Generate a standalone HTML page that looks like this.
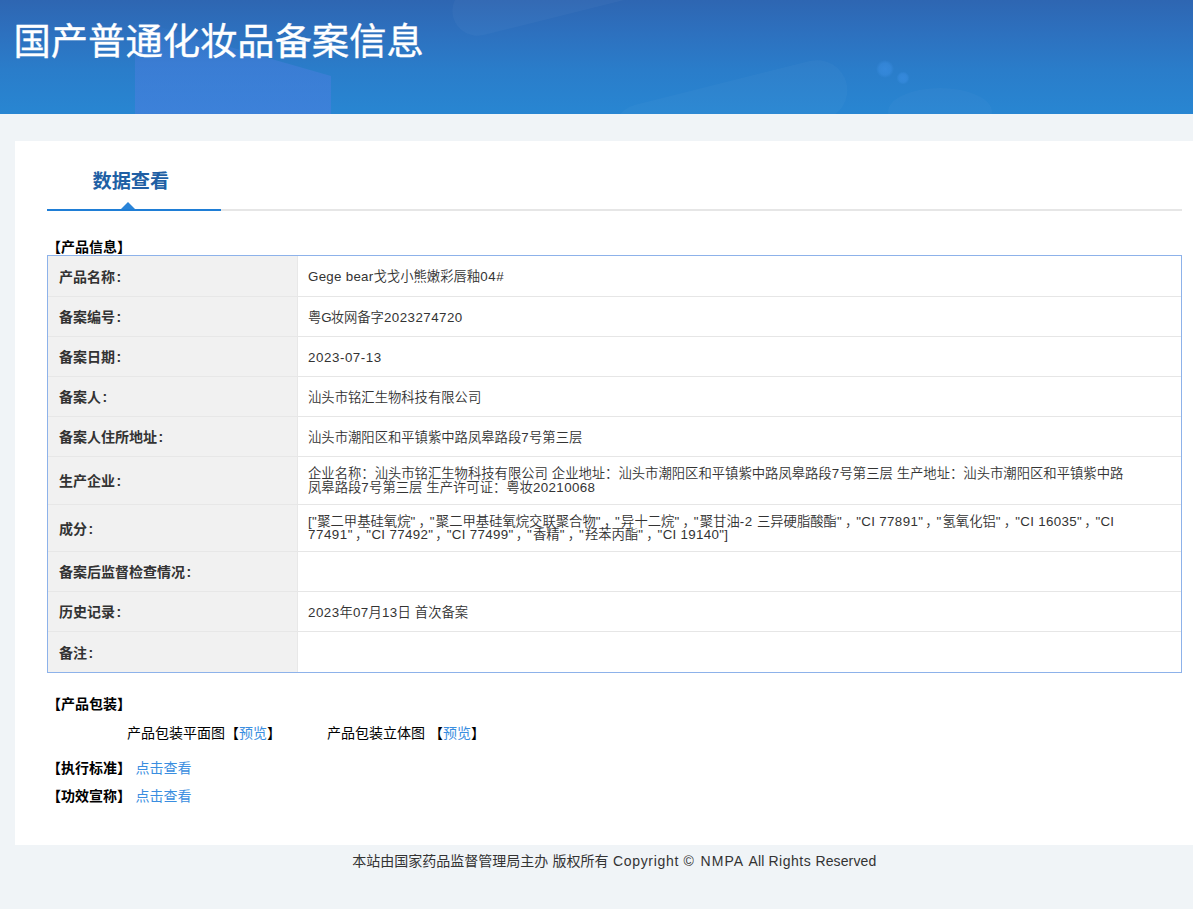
<!DOCTYPE html>
<html lang="zh-CN">
<head>
<meta charset="utf-8">
<title>国产普通化妆品备案信息</title>
<style>
*{box-sizing:border-box;}
html,body{margin:0;padding:0;}
body{background:#f0f4f7;font-family:"Liberation Sans","Noto Sans CJK SC",sans-serif;font-size:13px;color:#333;}
.pg{position:relative;width:1193px;height:909px;overflow:hidden;background:#f0f4f7;}
.hd{position:absolute;left:0;top:0;width:1228px;height:114px;overflow:hidden;background:linear-gradient(180deg,#2e66b2 0%,#2d71bf 30%,#2a7dca 62%,#2886d2 100%);}
.hd svg{position:absolute;left:0;top:0;}
.hd h1{position:absolute;left:13.5px;top:14.5px;margin:0;font-weight:400;font-size:37.3px;line-height:54px;color:#fff;white-space:nowrap;-webkit-text-stroke:0.35px #fff;}
.card{position:absolute;left:15px;top:141px;width:1198px;height:704px;background:#fff;}
.tabline{position:absolute;left:32px;top:68px;width:1135px;height:2px;background:#e6e6e6;}
.tabon{position:absolute;left:32px;top:68px;width:174px;height:2px;background:#1f7ed6;}
.tri{position:absolute;left:106px;top:61px;width:0;height:0;border-left:7px solid transparent;border-right:7px solid transparent;border-bottom:7px solid #2a84d8;}
.tabt{position:absolute;left:77.5px;top:27px;margin:0;font-size:19.2px;line-height:28px;font-weight:700;color:#205fa4;white-space:nowrap;}
.sec{position:absolute;left:32px;font-size:14px;line-height:18px;font-weight:700;color:#000;white-space:nowrap;}
table.t{position:absolute;left:32px;top:114px;width:1135px;border-collapse:separate;border-spacing:0;border:1px solid #8db2ea;table-layout:fixed;}
table.t td{padding:2px 10px 0 10px;font-weight:350;font-size:13.333px;line-height:13.333px;border-bottom:1px solid #e6e6e6;vertical-align:middle;color:#333;}
table.t td.l{width:250px;padding-left:11px;background:#f1f1f1;font-weight:700;font-size:14px;line-height:14px;border-right:1px solid #e8e8e8;border-bottom-color:#e7e7e7;}
table.t td.l i{font-style:normal;margin-left:1.5px;}
table.t td u{text-decoration:none;position:relative;left:2px;}
table.t tr{height:40px;}
table.t tr.last td{border-bottom:0;}
table.t tr.two td{padding-top:0;}
table.t td.l,table.t tr.two td.l{padding-top:1px;}
table.t tr.first{height:41px;}
.pk{position:absolute;font-size:14px;line-height:18px;color:#000;white-space:nowrap;}
a{color:#3a8ee0;text-decoration:none;}
.ft{position:absolute;left:352.2px;top:850.5px;font-size:14px;line-height:20px;color:#333;white-space:nowrap;}
</style>
</head>
<body>
<div class="pg">
<div class="hd">
<svg width="1228" height="114" viewBox="0 0 1228 114">
<defs>
<linearGradient id="pg" x1="0" y1="0" x2="0" y2="1"><stop offset="0" stop-color="#4a7ede" stop-opacity="0"/><stop offset="0.45" stop-color="#4a7ede" stop-opacity="0.5"/><stop offset="1" stop-color="#4a7ede" stop-opacity="0.6"/></linearGradient>
<radialGradient id="fl"><stop offset="0" stop-color="#3d90e6" stop-opacity="0.6"/><stop offset="0.65" stop-color="#3d90e6" stop-opacity="0.45"/><stop offset="1" stop-color="#3d90e6" stop-opacity="0"/></radialGradient>
</defs>
<rect x="450" y="-34" width="215" height="50" rx="25" fill="#fff" fill-opacity="0.032" transform="rotate(-14 557 -9)"/>
<rect x="610" y="82" width="240" height="60" rx="30" fill="#fff" fill-opacity="0.028" transform="rotate(-14 730 112)"/>
<ellipse cx="940" cy="112" rx="52" ry="24" fill="#fff" fill-opacity="0.022"/>
<polygon points="135,20 331,76 331,114 135,114" fill="url(#pg)"/>
<circle cx="885" cy="69" r="9" fill="url(#fl)"/>
<circle cx="903" cy="78" r="6.5" fill="url(#fl)"/>
</svg>
<h1>国产普通化妆品备案信息</h1>
</div>
<div class="card">
<div class="tabline"></div><div class="tabon"></div><div class="tri"></div>
<h3 class="tabt">数据查看</h3>
<div class="sec" style="top:97px;">【产品信息】</div>
<table class="t">
<tr class="first"><td class="l">产品名称<i>:</i></td><td><span style="letter-spacing:0.280px">Gege bear</span>戈戈小熊嫩彩唇釉<span style="letter-spacing:0.617px">04#</span></td></tr>
<tr><td class="l">备案编号<i>:</i></td><td>粤<span style="letter-spacing:-1.075px">G</span>妆网备字<span style="letter-spacing:0.458px">2023274720</span></td></tr>
<tr><td class="l">备案日期<i>:</i></td><td><span style="letter-spacing:0.561px">2023-07-13</span></td></tr>
<tr><td class="l">备案人<i>:</i></td><td>汕头市铭汇生物科技有限公司</td></tr>
<tr><td class="l">备案人住所地址<i>:</i></td><td>汕头市潮阳区和平镇紫中路凤皋路段<span style="letter-spacing:0.378px">7</span>号第三层</td></tr>
<tr class="two" style="height:48px"><td class="l">生产企业<i>:</i></td><td>企业名称：汕头市铭汇生物科技有限公司<span style="letter-spacing:0.197px"> </span>企业地址：汕头市潮阳区和平镇紫中路凤皋路段<span style="letter-spacing:0.378px">7</span>号第三层<span style="letter-spacing:0.197px"> </span>生产地址：汕头市潮阳区和平镇紫中路<br>凤皋路段<span style="letter-spacing:0.378px">7</span>号第三层<span style="letter-spacing:0.197px"> </span>生产许可证：粤妆<span style="letter-spacing:0.386px">20210068</span></td></tr>
<tr class="two" style="height:47px"><td class="l">成分<i>:</i></td><td><span style="letter-spacing:0.381px">["</span>聚二甲基硅氧烷<span style="letter-spacing:1.266px">"</span><u>，</u><span style="letter-spacing:1.266px">"</span>聚二甲基硅氧烷交联聚合物<span style="letter-spacing:1.266px">"</span><u>，</u><span style="letter-spacing:1.266px">"</span>异十二烷<span style="letter-spacing:1.266px">"</span><u>，</u><span style="letter-spacing:1.266px">"</span>聚甘油<span style="letter-spacing:0.546px">-2 </span>三异硬脂酸酯<span style="letter-spacing:1.266px">"</span><u>，</u><span style="letter-spacing:0.344px">"CI 77891"</span><u>，</u><span style="letter-spacing:1.266px">"</span>氢氧化铝<span style="letter-spacing:1.266px">"</span><u>，</u><span style="letter-spacing:0.344px">"CI 16035"</span><u>，</u><span style="letter-spacing:0.246px">"CI</span><br><span style="letter-spacing:0.534px">77491"</span><u>，</u><span style="letter-spacing:0.344px">"CI 77492"</span><u>，</u><span style="letter-spacing:0.344px">"CI 77499"</span><u>，</u><span style="letter-spacing:1.266px">"</span>香精<span style="letter-spacing:1.266px">"</span><u>，</u><span style="letter-spacing:1.266px">"</span>羟苯丙酯<span style="letter-spacing:1.266px">"</span><u>，</u><span style="letter-spacing:0.303px">"CI 19140"]</span></td></tr>
<tr><td class="l">备案后监督检查情况<i>:</i></td><td></td></tr>
<tr><td class="l">历史记录<i>:</i></td><td><span style="letter-spacing:0.486px">2023</span>年<span style="letter-spacing:0.386px">07</span>月<span style="letter-spacing:0.386px">13</span>日<span style="letter-spacing:0.297px"> </span>首次备案</td></tr>
<tr class="last"><td class="l">备注<i>:</i></td><td></td></tr>
</table>
<div class="sec" style="top:554px;">【产品包装】</div>
<div class="pk" style="left:112px;top:583px;">产品包装平面图【<a>预览</a>】</div>
<div class="pk" style="left:312px;top:583px;">产品包装立体图 【<a>预览</a>】</div>
<div class="sec" style="top:618px;">【执行标准】<a style="font-weight:400;font-size:14px;margin-left:4.5px;">点击查看</a></div>
<div class="sec" style="top:646px;">【功效宣称】<a style="font-weight:400;font-size:14px;margin-left:4.5px;">点击查看</a></div>
</div>
<div class="ft">本站由国家药品监督管理局主办<span style="letter-spacing:0.509px"> </span>版权所有<span style="letter-spacing:0.509px"> </span><span style="letter-spacing:0.669px">Copyright </span><span style="letter-spacing:1.441px">© </span><span style="letter-spacing:1.054px">NMPA </span><span style="letter-spacing:0.162px">All </span><span style="letter-spacing:0.489px">Rights </span><span style="letter-spacing:0.110px">Reserved</span></div>
</div>
</body>
</html>
